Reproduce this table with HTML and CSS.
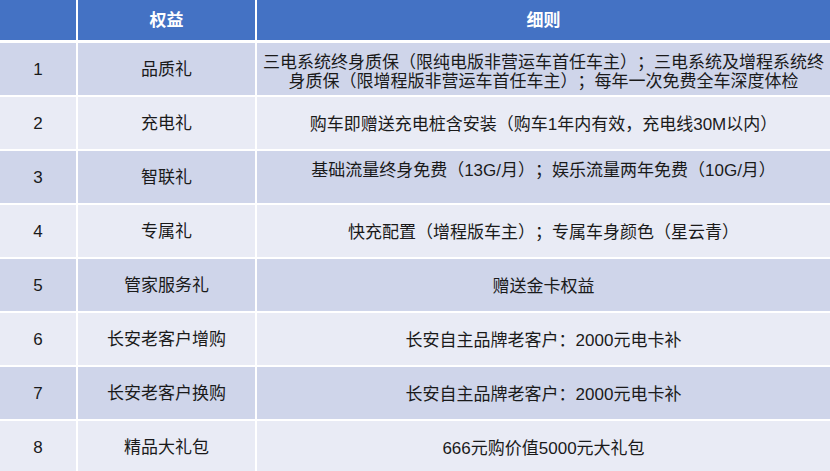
FILE: index.html
```html
<!DOCTYPE html>
<html lang="zh-CN">
<head>
<meta charset="utf-8">
<title>权益细则</title>
<link rel="stylesheet" href="styles.css">
</head>
<body>
<div class="table">
  <div class="cell head"></div>
  <div class="cell head">权益</div>
  <div class="cell head">细则</div>

  <div class="cell odd">1</div>
  <div class="cell odd">品质礼</div>
  <div class="cell odd detail two-line">三电系统终身质保（限纯电版非营运车首任车主）；三电系统及增程系统终<br>身质保（限增程版非营运车首任车主）；每年一次免费全车深度体检</div>

  <div class="cell even">2</div>
  <div class="cell even">充电礼</div>
  <div class="cell even detail">购车即赠送充电桩含安装（购车1年内有效，充电线30M以内）</div>

  <div class="cell odd">3</div>
  <div class="cell odd">智联礼</div>
  <div class="cell odd detail raised">基础流量终身免费（13G/月）；娱乐流量两年免费（10G/月）</div>

  <div class="cell even">4</div>
  <div class="cell even">专属礼</div>
  <div class="cell even detail">快充配置（增程版车主）；专属车身颜色（星云青）</div>

  <div class="cell odd">5</div>
  <div class="cell odd">管家服务礼</div>
  <div class="cell odd detail">赠送金卡权益</div>

  <div class="cell even">6</div>
  <div class="cell even">长安老客户增购</div>
  <div class="cell even detail">长安自主品牌老客户：2000元电卡补</div>

  <div class="cell odd">7</div>
  <div class="cell odd">长安老客户换购</div>
  <div class="cell odd detail">长安自主品牌老客户：2000元电卡补</div>

  <div class="cell even">8</div>
  <div class="cell even">精品大礼包</div>
  <div class="cell even detail">666元购价值5000元大礼包</div>
</div>
</body>
</html>
```

FILE: styles.css
```css
html, body {
  margin: 0;
  padding: 0;
  background: #ffffff;
}

body {
  width: 830px;
  height: 471px;
  overflow: hidden;
  font-family: "Liberation Sans", "Noto Sans CJK SC", sans-serif;
  font-size: 17px;
  color: #1a1a1a;
  text-spacing-trim: space-all;
}

.table {
  display: grid;
  grid-template-columns: 76px 177px 1fr;
  grid-template-rows: 41px repeat(8, 52px);
  column-gap: 2px;
  row-gap: 2px;
  background: #ffffff;
}

.cell {
  display: flex;
  align-items: center;
  justify-content: center;
  text-align: center;
  line-height: 19px;
}

.head {
  background: #4472c4;
  color: #ffffff;
  font-weight: bold;
  border-bottom: 1px solid #ffffff;
}

.odd {
  background: #cfd5ea;
}

.even {
  background: #e9ebf5;
}

.detail {
  padding: 2px 2px 0;
}

.two-line {
  padding-top: 6px;
}

.raised {
  padding-bottom: 15px;
}
```
